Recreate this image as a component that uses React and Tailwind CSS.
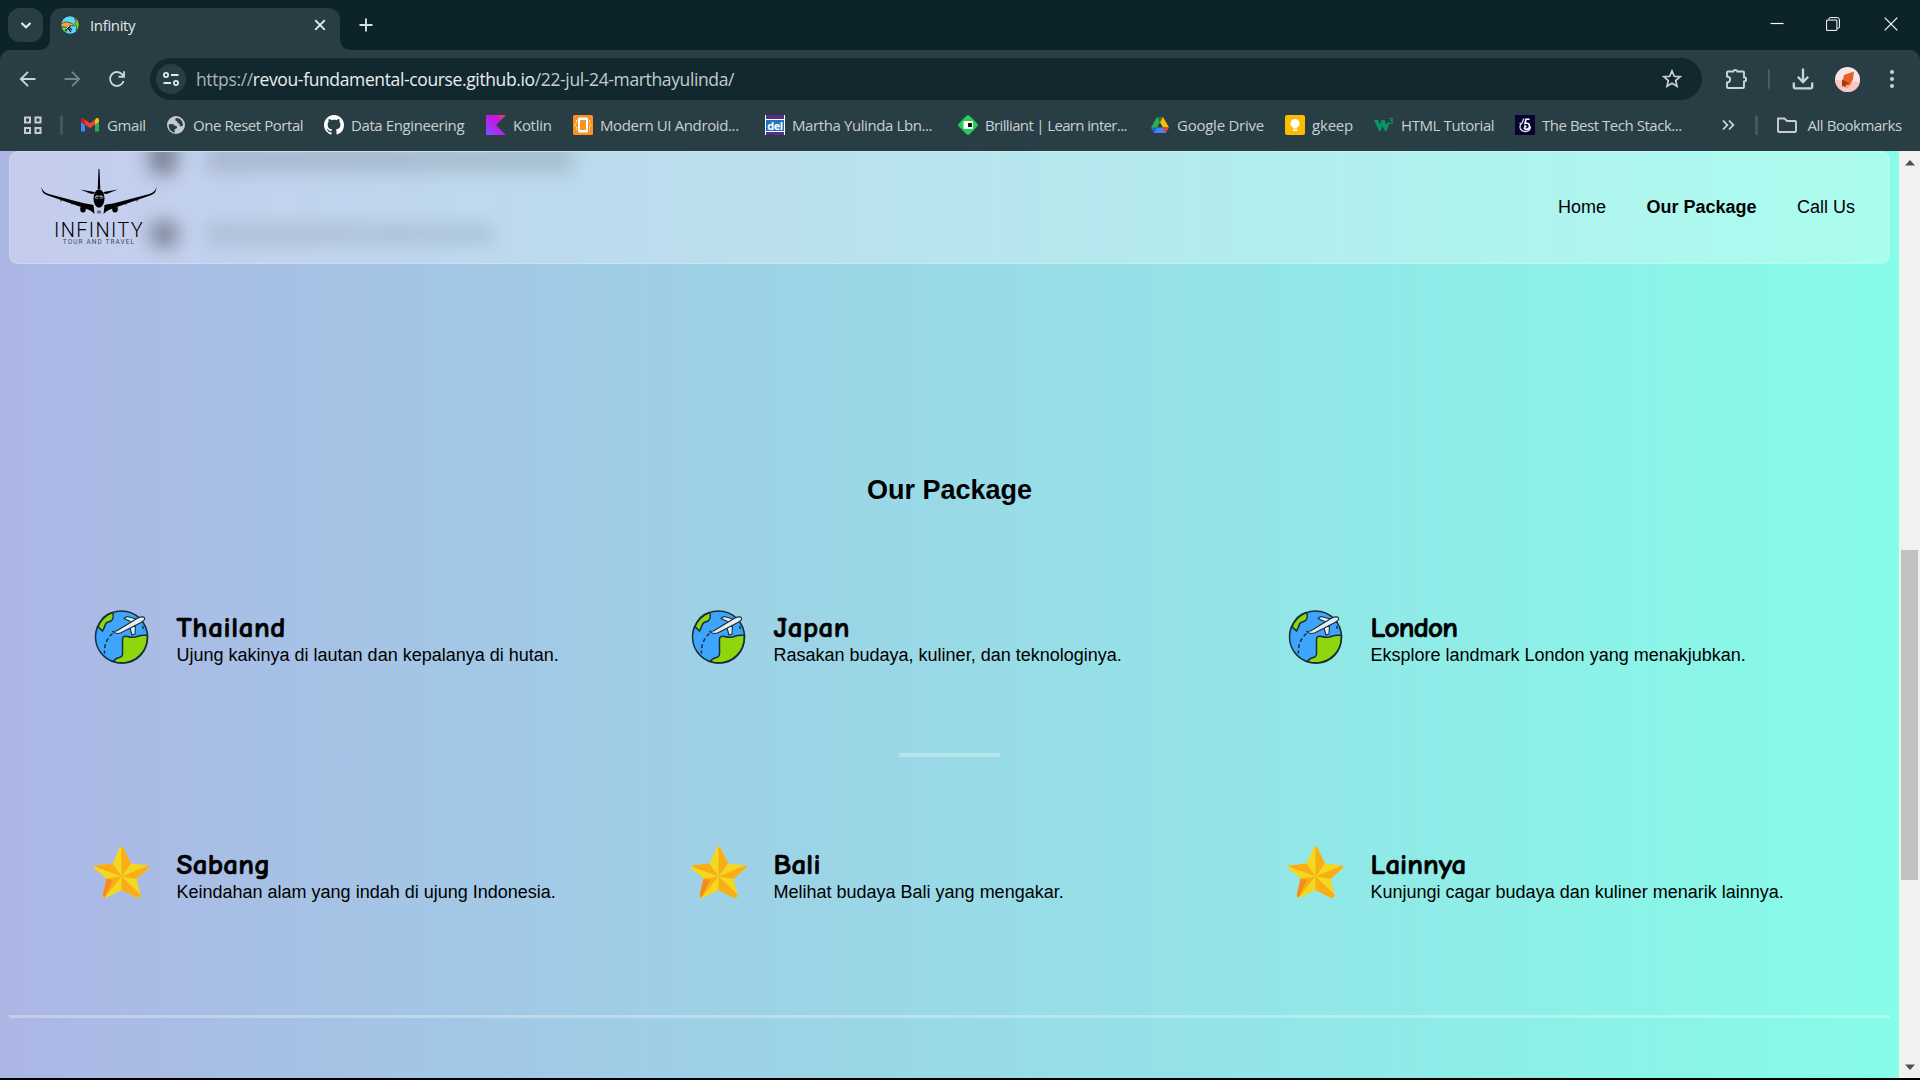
import React from "react";

const CHROME_FONT = "font-['Open_Sans','Noto_Sans',sans-serif]";

function Gmail() {
  return (
    <svg viewBox="0 0 20 20" className="size-5">
      <path d="M1 7v9.5h4V9z" fill="#4285f4" />
      <path d="M15 9v7.500h4V6z" fill="#34a853" />
      <path d="M15 5v4.800l4-3V5c0-2-2-2.400-3-1.500z" fill="#fbbc04" />
      <path d="M5 4.500v5L10 13.300l5-3.800v-5l-5 3.800z" fill="#ea4335" />
      <path d="M1 5v2l4 3V4.500L4 3.500C3 2.600 1 3.100 1 5z" fill="#c5221f" />
    </svg>
  );
}

function Globe() {
  return (
    <svg viewBox="0 0 20 20" className="size-5">
      <circle cx="10" cy="10" r="9" fill="#c4c9d2" />
      <path d="M2.800 9.500c1.500-.8 4.200-.8 5.200.5 1 1.400 3 .3 3 2.300s-2.500 1.200-2.500 2.700l.5 2.500C4.500 17 2.300 13 2.800 9.500zM10.500 3C8.500 4 9 5.500 10.500 6c1.400.5.5 2.300 2 2.500 1.700.2 1.500 1.300 1 2.500 1.500.8 2.500 0 3.500-.5C17 6 14 3 10.500 3z" fill="#293e44" />
    </svg>
  );
}

function Github() {
  return (
    <svg viewBox="0 0 16 16" className="size-5">
      <path
        fill="#fff"
        d="M8 0C3.580 0 0 3.580 0 8c0 3.540 2.290 6.530 5.470 7.590.4.070.55-.17.55-.38 0-.19-.01-.82-.01-1.490-2.010.37-2.530-.49-2.690-.94-.09-.23-.48-.94-.82-1.130-.28-.15-.68-.52-.01-.53.63-.01 1.080.58 1.230.82.720 1.210 1.870.87 2.330.66.070-.52.280-.87.510-1.070-1.780-.2-3.640-.89-3.640-3.950 0-.87.310-1.590.820-2.150-.08-.2-.36-1.020.080-2.120 0 0 .67-.21 2.200.82.640-.18 1.320-.27 2-.27s1.360.09 2 .27c1.530-1.040 2.200-.82 2.200-.82.440 1.100.16 1.920.080 2.120.51.56.82 1.270.82 2.150 0 3.070-1.870 3.750-3.650 3.950.290.25.540.73.540 1.480 0 1.070-.01 1.930-.01 2.200 0 .21.150.46.550.38A8.010 8.010 0 0 0 16 8c0-4.420-3.580-8-8-8z"
      />
    </svg>
  );
}

function Kotlin() {
  return (
    <svg viewBox="0 0 20 20" className="size-5">
      <defs>
        <linearGradient id="kt" x1="1" y1="0" x2="0" y2="1">
          <stop offset="0" stopColor="#e8485c" />
          <stop offset=".35" stopColor="#c711e1" />
          <stop offset="1" stopColor="#7f52ff" />
        </linearGradient>
      </defs>
      <path d="M0 0h20L10 10l10 10H0z" fill="url(#kt)" />
    </svg>
  );
}

function Android() {
  return (
    <svg viewBox="0 0 20 20" className="size-5">
      <rect width="20" height="20" rx="1.500" fill="#f7931e" />
      <rect x="5" y="2.500" width="10" height="15" rx="1.500" fill="#fff" />
      <rect x="7" y="5" width="6" height="10" fill="#f7931e" />
      <path d="M3.500 5v2.500L2 10l1.500 2.500V15M16.500 5v2.500L18 10l-1.500 2.500V15" stroke="#fff" strokeDasharray="1.500 1" fill="none" />
    </svg>
  );
}

function Del() {
  return (
    <span className="relative flex size-5 flex-col justify-between overflow-hidden border-x border-white bg-white">
      <span className="h-1 bg-[#5b2d82]" />
      <span className="flex h-[11px] items-center justify-center bg-[#1c75bc] font-['Open_Sans',sans-serif] text-[11px] font-bold leading-none tracking-[-0.5px] text-white">
        del
      </span>
      <span className="h-[3px] bg-[#5b2d82]" />
    </span>
  );
}

function Brilliant() {
  return (
    <svg viewBox="0 0 20 20" className="size-5">
      <path d="M8.500.8q1.500-1.200 3 0l7.700 7.700q1.200 1.500 0 3l-7.700 7.700q-1.500 1.200-3 0L.8 11.500q-1.200-1.500 0-3z" fill="#29cc57" />
      <rect x="5.500" y="6" width="9.500" height="8" rx="1" fill="#fff" />
      <rect x="10" y="8" width="4" height="4" fill="#111" />
    </svg>
  );
}

function Drive() {
  return (
    <svg viewBox="0 0 20 20" className="size-5">
      <path d="M7 2h6l-3 5.200z" fill="#188038" />
      <path d="M7 2l3 5.200L4 18 1 12.500z" fill="#34a853" />
      <path d="M13 2l6 10.500h-6L10 7.200z" fill="#fbbc04" />
      <path d="M4 18l3-5.500h6.200L16 18z" fill="#4285f4" />
      <path d="M13 12.500h6L16 18z" fill="#ea4335" />
      <path d="M1 12.500h6L4 18z" fill="#1967d2" />
    </svg>
  );
}

function Keep() {
  return (
    <svg viewBox="0 0 20 20" className="size-5">
      <rect width="20" height="20" rx="2" fill="#fbbc04" />
      <circle cx="10" cy="8.500" r="4.500" fill="#fff" />
      <path d="M8 11h4v2.500H8zM8 14.500h4V16H8z" fill="#fff" />
    </svg>
  );
}

function W3() {
  return (
    <svg viewBox="0 0 20 20" className="size-5">
      <path d="M0 5h4l2 5 1.500-5h3l2 5 1.500-3 1.500 1-3 8h-1.500L8.500 11 6.500 16H5z" fill="#059862" />
      <path d="M15.500 3.500h3l-1.500 2c2 0 2 2.800-.3 2.700l-1.200-.5" fill="none" stroke="#059862" strokeWidth="1.100" />
    </svg>
  );
}

function Stack() {
  return (
    <svg viewBox="0 0 20 20" className="size-5">
      <rect width="20" height="20" fill="#080330" />
      <path d="M14.500 4.300h-3.500l-1 4.200c3-.8 4.600.3 4.400 3.300-.3 3-4.400 3.500-5.400.7" fill="none" stroke="#fff" strokeWidth="1.600" />
      <path d="M9 3.500C7.500 6 8 7 6.500 8.500 4 11 4.500 16 10 16.500c3.500.2 5.500-2 5.500-5M4.500 8l1.500.5" fill="none" stroke="#e1e1ee" strokeWidth="1.300" />
      <circle cx="10.300" cy="11.500" r="1.300" fill="#fff" />
    </svg>
  );
}

const bookmarks = [
  { icon: Gmail, label: "Gmail", cls: "w-[86px]", text: "tracking-[-0.4px]" },
  { icon: Globe, label: "One Reset Portal", cls: "w-[158px]", text: "tracking-[-0.45px]" },
  { icon: Github, label: "Data Engineering", cls: "w-[162px]", text: "tracking-[-0.4px]" },
  { icon: Kotlin, label: "Kotlin", cls: "w-[87px]", text: "tracking-[-0.3px]" },
  { icon: Android, label: "Modern UI Android...", cls: "w-[192px]", text: "tracking-[-0.37px]" },
  { icon: Del, label: "Martha Yulinda Lbn...", cls: "w-[193px]", text: "tracking-[-0.4px]" },
  { icon: Brilliant, label: "Brilliant | Learn inter...", cls: "w-[192px]", text: "tracking-[-0.64px]" },
  { icon: Drive, label: "Google Drive", cls: "w-[135px]", text: "tracking-[-0.25px]" },
  { icon: Keep, label: "gkeep", cls: "w-[89px]", text: "tracking-[-0.2px]" },
  { icon: W3, label: "HTML Tutorial", cls: "w-[141px]", text: "tracking-[-0.4px]" },
  { icon: Stack, label: "The Best Tech Stack...", cls: "w-[205px]", text: "tracking-[-0.47px]" },
];

function Favicon() {
  return (
    <svg viewBox="0 0 20 20" className="size-5">
      <circle cx="10" cy="10" r="9.300" fill="#62d5f5" stroke="#143038" />
      <path d="M14 2c3.500 1.500 5.500 5 5 8.500-.4 3-1.500 4-3 5 .8-3.500.5-5-1-7 1.500-1.500.5-4-1-6.500z" fill="#7fc832" stroke="#1d4a1f" strokeWidth=".7" />
      <path d="M1 9c3-2 6-2.500 8-1.500 2.500.5 5 2 5.500 3.500l-3.500-.5-4 2-6-1z" fill="#f2a83e" stroke="#3b2a12" strokeWidth=".7" />
      <path d="M2 13l3-1 2 3-1 2.500C4 17 2.500 15 2 13z" fill="#8fd031" stroke="#173" strokeWidth=".6" />
      <path d="M5 16l5-5M7 12l4 5M9 12l3 3" stroke="#14304c" strokeWidth="1.300" />
      <path d="M6 14l3-3" stroke="#fff" strokeWidth=".8" />
      <path d="M15 3l2 2" stroke="#c92b3a" strokeWidth="1.600" />
    </svg>
  );
}

function TabStrip() {
  return (
    <div className="flex h-[50px] items-start bg-[#0c2329] pl-2 pt-2">
      <div className="flex h-[34px] w-[35px] items-center justify-center rounded-xl bg-[#293e44]">
        <svg viewBox="0 0 12 12" className="size-3"><path d="M1.500 4L6 8.300 10.500 4" fill="none" stroke="#e3e8ea" strokeWidth="2.200" /></svg>
      </div>
      <svg viewBox="0 0 12 12" className="ml-[-5px] size-3 self-end"><path d="M12 0v12H0C8 12 12 8 12 0z" fill="#293e44" /></svg>
      <div className="flex h-[42px] w-[290px] items-center rounded-t-xl bg-[#293e44] pb-2 pl-2.5">
        <Favicon />
        <span className="ml-2.5 w-[224px] text-[15px] tracking-[-0.35px] text-[#e3e8ea]">Infinity</span>
        <svg viewBox="0 0 12 12" className="size-3"><path d="M1.200 1.200l9.600 9.600M10.800 1.200l-9.600 9.600" stroke="#e3e8ea" strokeWidth="1.900" /></svg>
      </div>
      <svg viewBox="0 0 12 12" className="size-3 self-end"><path d="M0 0v12h12C4 12 0 8 0 0z" fill="#293e44" /></svg>
      <svg viewBox="0 0 14 14" className="ml-[7px] mt-[10px] size-3.5"><path d="M7 .5v13M.5 7h13" stroke="#d4e2e7" strokeWidth="1.900" /></svg>
      <div className="ml-auto mr-[22px] flex items-center">
        <svg viewBox="0 0 14 14" className="mr-[42px] mt-[8px] size-3.5"><path d="M.5 6.500h13" stroke="#fff" strokeWidth="1.200" /></svg>
        <svg viewBox="0 0 14 14" className="mr-[44px] mt-[9px] size-3.5"><path d="M.6 3.100h10.300v10.300H.6z" fill="none" stroke="#fff" /><path d="M2.800 2.500V2Q2.800.6 4.200.6h7.200q2 0 2 2V10q0 1.300-1.400 1.300h-.6" fill="none" stroke="#fff" /></svg>
        <svg viewBox="0 0 14 14" className="mt-[9px] size-3.5"><path d="M.7.700l12.600 12.600M13.300.700L.7 13.300" stroke="#fff" strokeWidth="1.200" /></svg>
      </div>
    </div>
  );
}

function Toolbar() {
  return (
    <div className="bg-[#0c2329]">
      <div className="flex h-[50px] items-start rounded-t-[10px] bg-[#293e44] pt-2">
        <div className="flex h-[42px] w-[150px] items-center pl-[19px]">
          <svg viewBox="0 0 18 18" className="size-[18px]"><path d="M16.500 9H2M9 1.800L1.800 9 9 16.200" fill="none" stroke="#c0d8e0" strokeWidth="1.900" /></svg>
          <svg viewBox="0 0 18 18" className="ml-[26px] size-[18px]"><path d="M1.500 9H16M9 1.800L16.200 9 9 16.200" fill="none" stroke="#71858b" strokeWidth="1.900" /></svg>
          <svg viewBox="0 0 18 18" className="ml-[27px] size-[18px]"><path d="M15.600 11a6.900 6.900 0 1 1-1.400-6.600L16 6.500M16 1.200v5.500h-5.500" fill="none" stroke="#c0d8e0" strokeWidth="1.900" /></svg>
        </div>
        <div className="flex h-[42px] w-[1552px] items-center rounded-full bg-[#13282e] pl-1.5">
          <div className="flex size-[30px] items-center justify-center rounded-full bg-[#293e44]">
            <svg viewBox="0 0 16 16" className="size-4" fill="none" stroke="#dfe7ea" strokeWidth="1.800"><circle cx="3" cy="4" r="2.100" /><path d="M8 4h7.500M.5 12H8" /><circle cx="13" cy="12" r="2.100" /></svg>
          </div>
          <div className="ml-2.5 w-[1466px] whitespace-nowrap pt-px text-[17.5px] tracking-[-0.37px] text-[#e9eef0]">
            <span className="text-[#a9b4b8]">https://</span>revou-fundamental-course.github.io<span className="text-[#c3cccf]">/22-jul-24-marthayulinda/</span>
          </div>
          <svg viewBox="0 0 20 20" className="size-5"><path d="M10 2l2.300 5.300 5.700.5-4.300 3.800 1.300 5.700-5-3-5 3 1.300-5.700L2 7.800l5.700-.5z" fill="none" stroke="#ccd3d6" strokeWidth="1.700" /></svg>
        </div>
        <div className="flex h-[42px] items-center">
          <svg viewBox="0 0 24 24" className="ml-[22px] size-6"><path d="M4 4.500h5.300a2.100 2.100 0 0 1 4 0H19q1 0 1 1v4.800a2.100 2.100 0 0 1 0 4.200V20q0 1-1 1H4q-1 0-1-1v-4.500q3.200-.3 3.200-3T3 9.500V5.500q0-1 1-1z" fill="none" stroke="#c0d8e0" strokeWidth="1.900" /></svg>
          <span className="ml-[20px] h-5 w-0.5 rounded bg-[#465d64]" />
          <svg viewBox="0 0 22 22" className="ml-[22px] size-[22px]"><path d="M11 .5v13M5.800 8.800L11 14l5.200-5.200M1.800 14.500V19q0 1.300 1.300 1.300h15.800q1.300 0 1.300-1.300v-4.500" fill="none" stroke="#c0d8e0" strokeWidth="2.300" /></svg>
          <svg viewBox="0 0 25 25" className="ml-[21px] size-[25px]"><circle cx="12.500" cy="12.500" r="12.500" fill="#fbe3e6" /><path d="M0 13l25 2a12.500 12.500 0 0 1-24 2z" fill="#fcc5c3" /><path d="M9 8l10-3.500L18 12l-3 6-3 2-5-3 1-4z" fill="#e8601f" /><path d="M7 12.500l7 3.500-2 4.500-5-1.500z" fill="#a9380f" /><path d="M10.500 18l3.500-.5-1 4-2-1z" fill="#e9ad71" /></svg>
          <svg viewBox="0 0 6 20" className="ml-[29px] h-5 w-1.5" fill="#c0d8e0"><circle cx="3" cy="3" r="2" /><circle cx="3" cy="10" r="2" /><circle cx="3" cy="17" r="2" /></svg>
        </div>
      </div>
    </div>
  );
}

function BookmarkBar() {
  return (
    <div className="flex h-[51px] items-center whitespace-nowrap bg-[#293e44] pb-px text-[15px] text-[#c9cfd3]">
      <svg viewBox="0 0 18 18" className="ml-[23px] h-[18px] w-[19px]" fill="none" stroke="#c9cdd2" strokeWidth="2"><path d="M1.500 1.500h5v5h-5zM12 1.500h5v5h-5zM1.500 12h5v5h-5zM12 12h5v5h-5z" /></svg>
      <span className="ml-[18px] mr-[17px] h-5 w-[3px] rounded bg-[#405860]" />
      {bookmarks.map(({ icon: Icon, label, cls, text }) => (
        <div key={label} className={`flex shrink-0 items-center ${cls}`}>
          <Icon />
          <span className={`ml-[7px] ${text}`}>{label}</span>
        </div>
      ))}
      <svg viewBox="0 0 14 12" className="ml-px h-3 w-[14px]"><path d="M2 1.500L6.300 6 2 10.500M8 1.500L12.300 6 8 10.500" fill="none" stroke="#d3d8db" strokeWidth="1.800" /></svg>
      <span className="ml-[20px] h-5 w-[3px] rounded bg-[#405860]" />
      <svg viewBox="0 0 22 18" className="ml-[18px] h-[18px] w-[22px]"><path d="M2 2.500h6.500L11 5h8q1 0 1 1v9q0 1-1 1H3q-1 0-1-1z" fill="none" stroke="#c9cdd2" strokeWidth="1.900" /></svg>
      <span className="ml-[9.5px] tracking-[-0.45px]">All Bookmarks</span>
    </div>
  );
}

function Logo() {
  return (
    <div className="flex w-[116px] flex-col items-center">
      <svg viewBox="0 0 116 52" className="h-[52px] w-[116px]">
        <path d="M57.500 0h1l.8 20h-2.600zM39 20.500l14.500 2.500v1.500l-3 .5zM77 20.500L62.500 23v1.500l3 .5z" />
        <path d="M.6 17.500c.3 3.500 2.500 6 7 7.500L40 33.500c6 1.800 10 1.500 12.500 2.500l1 9c-3-3.500-7-5-12-6.500L7 26.500C2 25 .5 22 .6 17.500zM115.400 17.500c-.3 3.500-2.500 6-7 7.500L76 33.500c-6 1.800-10 1.500-12.500 2.500l-1 9c3-3.500 7-5 12-6.500L109 26.500c5-1.500 6.500-4.500 6.400-9z" />
        <ellipse cx="58" cy="29.500" rx="5.500" ry="9.300" />
        <path d="M53.500 28l2-1.500h5l2 1.500-1 1.500h-7z" fill="#c3cdec" />
        <path d="M54.500 28.300h7M58 26v4" stroke="#000" />
        <ellipse cx="42" cy="40" rx="2.800" ry="3.600" /><ellipse cx="74" cy="40" rx="2.800" ry="3.600" />
        <path d="M42 34v4M74 34v4M57 41.500v3M59 41.500v3M20 29.500v3M31 32.500v3M96 29.500v3M85 32.500v3" stroke="#000" strokeWidth=".9" />
      </svg>
      <span className="h-[17px] whitespace-nowrap font-['Roboto',sans-serif] text-[20px] font-light leading-[18px] tracking-[1.300px] text-black">INFINITY</span>
      <span className="h-[8px] whitespace-nowrap font-['Roboto',sans-serif] text-[6.500px] leading-[8px] tracking-[1.1px] text-[#444b5c]">TOUR AND TRAVEL</span>
    </div>
  );
}

function SiteHeader() {
  return (
    <header className="relative mx-[9px] flex h-[113px] items-center justify-between overflow-hidden rounded-[9px] border border-white/20 bg-white/30 pl-[31px] pr-[34px]">
      <div className="absolute left-0 top-0 size-full">
        <span className="absolute left-[138px] top-[-14px] h-[38px] w-[30px] rounded-full bg-black/36 blur-[9px]" />
        <span className="absolute left-[197px] top-[-8px] h-[28px] w-[366px] bg-black/12 blur-[9px]" />
        <span className="absolute left-[139px] top-[68px] h-[28px] w-[30px] rounded-full bg-black/35 blur-[9px]" />
        <span className="absolute left-[197px] top-[73px] h-[18px] w-[286px] bg-black/10 blur-[9px]" />
      </div>
      <div className="relative">
        <Logo />
      </div>
      <nav className="relative flex items-center gap-[40.5px] pb-[2px] text-lg leading-none text-black">
        <a>Home</a>
        <a className="font-bold">Our Package</a>
        <a>Call Us</a>
      </nav>
    </header>
  );
}

function Earth() {
  return (
    <svg viewBox="0 0 56 56" className="size-14 shrink-0">
      <circle cx="27.500" cy="28" r="26" fill="#3fa4fb" />
      <path d="M4 17.500C7 10 12 5 18.500 3.500c1.500 3.500.5 7-1.500 8.500l-4 1.500c-2.500 1-1.500 4.500-4.500 8.500z" fill="#8fd60f" stroke="#16303a" strokeWidth="1.500" />
      <path d="M28.500 30c0-3 3-3 5-2.500 5 1.500 8 1 11-.5 3-1.200 6-.7 9-.7C54 42 44 54 28 54c-4 0-7-.7-9-1.700 3-3 4-3.500 7-4 3.500-1 2.500-4 2.500-6z" fill="#8fd60f" stroke="#16303a" strokeWidth="1.500" />
      <path d="M18.500 24.500c-6 5-8.500 12-8 20" fill="none" stroke="#16303a" strokeWidth="1.500" strokeDasharray="4 2.500" />
      <path d="M48.500 17l1.500 5" stroke="#16303a" strokeWidth="1.500" strokeDasharray="3 2" />
      <circle cx="27.500" cy="28" r="26" fill="none" stroke="#16303a" strokeWidth="1.500" />
      <path d="M18.500 22.500l4-.5L43 9.500c3-1.800 6.500-2.300 7.500-.7 1 1.800-1.500 3.700-4 4.900L27 23.700c-3 1.300-5.500 1.300-8.500-1.200zM36.500 12.500l-6.500-3 3-2 9.500 2.500M36 19l2 7 3-1 .5-9" fill="#e8edf5" stroke="#16303a" strokeWidth="1.100" strokeLinejoin="round" />
    </svg>
  );
}

function Star() {
  return (
    <svg viewBox="0 1.500 56 56" className="size-14 shrink-0">
      <path d="M27.500 2q1.500 0 2.500 2.500L37 19l17 2q2.500.8.500 3L42.500 34.500l4 15.500q.2 4.500-4 3L27.500 45.500 12.500 53q-4.500 1-3.500-3.500L12.500 34 .5 24q-1.500-2.500 1-3l17-2L25.500 3.500z" fill="#f2d81e" />
      <path d="M27.500 32V2q1.500 0 2.500 2.500L37 19zM27.500 32l27-11.200q1.500 1.200 0 3L42.500 34.500zM27.500 32l19 18q.2 4.500-4 3L27.500 45.500zM27.500 32l-17 21q-2.300-.8-1.500-3.500L12.500 34zM27.500 32L.2 21.500q.2-.5 1.300-.5l17-2z" fill="#fbad18" />
      <path d="M12.500 34.500l6.500 1-8.500 17.500q-2-1-1.500-3.500zM.5 21.500L14 25l1.500 1L3 22.500z" fill="#f58a1f" />
    </svg>
  );
}

const international = [
  { title: "Thailand", track: "tracking-[0.6px]", text: "Ujung kakinya di lautan dan kepalanya di hutan." },
  { title: "Japan", track: "tracking-[0.5px]", text: "Rasakan budaya, kuliner, dan teknologinya." },
  { title: "London", track: "tracking-[-0.8px]", text: "Eksplore landmark London yang menakjubkan." },
];
const domestic = [
  { title: "Sabang", track: "tracking-[0.3px]", text: "Keindahan alam yang indah di ujung Indonesia." },
  { title: "Bali", track: "tracking-[0.2px]", text: "Melihat budaya Bali yang mengakar." },
  { title: "Lainnya", track: "tracking-[0px]", text: "Kunjungi cagar budaya dan kuliner menarik lainnya." },
];

function PackageRow({ items, icon: Icon }) {
  return (
    <div className="grid grid-cols-[597px_597px_597px] pl-[94px]">
      {items.map((item) => (
        <div key={item.title} className="flex h-[60px] gap-[26.5px]">
          <Icon />
          <div className="whitespace-nowrap text-black">
            <h3 className={`h-[36px] font-['Comic_Sans_MS','Comic_Neue',cursive] text-[29px] font-bold leading-[38px] [-webkit-text-stroke:0.7px_black] ${item.track}`}>{item.title}</h3>
            <p className="text-lg leading-[21px]">{item.text}</p>
          </div>
        </div>
      ))}
    </div>
  );
}

function Scrollbar() {
  return (
    <div className="flex h-full w-[21px] flex-col items-center bg-[#f1f1f1]">
      <svg viewBox="0 0 10 6" className="mt-[9px] h-[6px] w-[10px]"><path d="M0 5.500L5 0l5 5.500z" fill="#505050" /></svg>
      <span className="mt-[384px] h-[330px] w-[17px] bg-[#c1c1c1]" />
      <svg viewBox="0 0 10 6" className="mb-[8px] mt-auto h-[6px] w-[10px]"><path d="M0 .500L5 6 10 .500z" fill="#505050" /></svg>
    </div>
  );
}

export default function App() {
  return (
    <div className={`flex h-[1080px] w-[1920px] flex-col overflow-hidden bg-black ${CHROME_FONT}`}>
      <TabStrip />
      <Toolbar />
      <BookmarkBar />
      <div className="flex h-[927px]">
        <main className="flex h-full w-[1899px] flex-col bg-[linear-gradient(to_right,#acb6e5,#86fde8)] font-['Liberation_Sans',Arial,sans-serif]">
          <SiteHeader />
          <h2 className="mt-[211px] text-center text-[27px] font-bold leading-[31px] text-black">Our Package</h2>
          <div className="mt-[103px]">
            <PackageRow items={international} icon={Earth} />
          </div>
          <hr className="mx-auto mt-[84px] h-[4px] w-[101px] border-0 bg-white/30" />
          <div className="mt-[89px]">
            <PackageRow items={domestic} icon={Star} />
          </div>
          <hr className="mx-[9px] mt-[109px] h-[3px] border-0 bg-white/30" />
        </main>
        <Scrollbar />
      </div>
    </div>
  );
}
